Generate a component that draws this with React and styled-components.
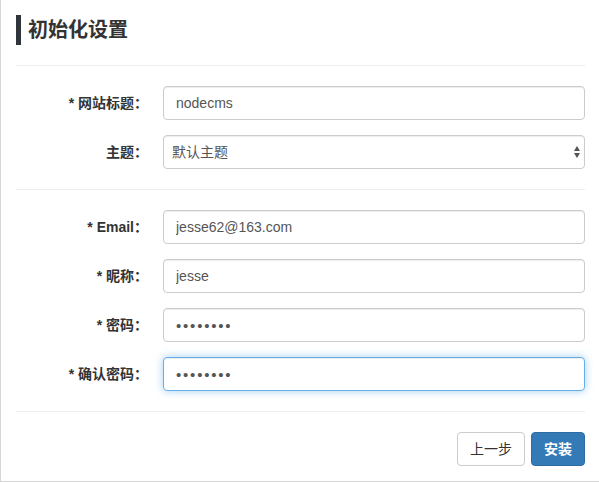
import styled, { createGlobalStyle } from "styled-components";

const GlobalStyle = createGlobalStyle`
  html, body {
    margin: 0;
    padding: 0;
    background: #fff;
  }
  body {
    font-family: "Liberation Sans", "Noto Sans CJK SC", sans-serif;
    font-size: 14px;
    color: #333;
  }
  * {
    box-sizing: border-box;
  }
`;

const Panel = styled.div`
  width: 599px;
  height: 482px;
  border-left: 1px solid #d6d6d6;
  border-bottom: 1px solid #d6d6d6;
  padding: 15px 14px 15px 15px;
  display: flex;
  flex-direction: column;
`;

const Title = styled.h3`
  margin: 0;
  height: 30px;
  line-height: 30px;
  border-left: 5px solid #2f353b;
  padding-left: 7px;
  font-size: 20px;
  font-weight: bold;
  color: #333;
`;

const Divider = styled.hr`
  margin: 20px 0;
  border: 0;
  border-top: 1px solid #eee;
  height: 0;
`;

const Section = styled.div`
  display: flex;
  flex-direction: column;
  gap: 15px;
`;

const Row = styled.div`
  display: grid;
  grid-template-columns: 132px 1fr;
  column-gap: 15px;
  align-items: start;
`;

const Label = styled.label`
  text-align: right;
  font-weight: bold;
  line-height: 20px;
  padding-top: 7px;
  white-space: nowrap;
`;

const Input = styled.input`
  display: block;
  width: 100%;
  height: 34px;
  padding: 6px 12px;
  font-family: inherit;
  font-size: ${({ type }) => (type === "password" ? "15px" : "14px")};
  color: #555;
  background: #fff;
  border: 1px solid ${({ $focused }) => ($focused ? "#66afe9" : "#ccc")};
  border-radius: 4px;
  outline: none;
  box-shadow: ${({ $focused }) =>
    $focused
      ? "inset 0 1px 1px rgba(0,0,0,.075), 0 0 8px rgba(102,175,233,.6)"
      : "inset 0 1px 1px rgba(0,0,0,.075)"};
  letter-spacing: ${({ type }) => (type === "password" ? "1.8px" : "normal")};
`;

const SelectWrap = styled.div`
  position: relative;

  &::before,
  &::after {
    content: "";
    position: absolute;
    right: 5px;
    border-left: 3.5px solid transparent;
    border-right: 3.5px solid transparent;
    pointer-events: none;
  }
  &::before {
    top: 11px;
    border-bottom: 5px solid #555;
  }
  &::after {
    top: 18px;
    border-top: 5px solid #555;
  }
`;

const Select = styled.select`
  display: block;
  width: 100%;
  height: 34px;
  padding: 6px 8px;
  font-family: inherit;
  font-size: 14px;
  color: #555;
  background: #fff;
  border: 1px solid #ccc;
  border-radius: 4px;
  outline: none;
  appearance: none;
  -webkit-appearance: none;
  box-shadow: inset 0 1px 1px rgba(0,0,0,.075);
`;

const Actions = styled.div`
  display: flex;
  justify-content: flex-end;
  gap: 6px;
`;

const Button = styled.button`
  height: 34px;
  padding: 6px 12px;
  font-family: inherit;
  font-size: 14px;
  line-height: 20px;
  border-radius: 4px;
  cursor: pointer;
  border: 1px solid ${({ $primary }) => ($primary ? "#2e6da4" : "#ccc")};
  background: ${({ $primary }) => ($primary ? "#337ab7" : "#fff")};
  color: ${({ $primary }) => ($primary ? "#fff" : "#333")};
  font-weight: ${({ $primary }) => ($primary ? "bold" : "normal")};
`;

const App = () => {
  return (
    <>
      <GlobalStyle />
      <Panel>
        <Title>初始化设置</Title>
        <Divider />
        <Section>
          <Row>
            <Label>* 网站标题：</Label>
            <Input defaultValue="nodecms" />
          </Row>
          <Row>
            <Label>主题：</Label>
            <SelectWrap>
              <Select defaultValue="default">
                <option value="default">默认主题</option>
              </Select>
            </SelectWrap>
          </Row>
        </Section>
        <Divider />
        <Section>
          <Row>
            <Label>* Email：</Label>
            <Input defaultValue="jesse62@163.com" />
          </Row>
          <Row>
            <Label>* 昵称：</Label>
            <Input defaultValue="jesse" />
          </Row>
          <Row>
            <Label>* 密码：</Label>
            <Input type="password" defaultValue="12345678" />
          </Row>
          <Row>
            <Label>* 确认密码：</Label>
            <Input type="password" defaultValue="12345678" $focused />
          </Row>
        </Section>
        <Divider />
        <Actions>
          <Button>上一步</Button>
          <Button $primary>安装</Button>
        </Actions>
      </Panel>
    </>
  );
};

export default App;
